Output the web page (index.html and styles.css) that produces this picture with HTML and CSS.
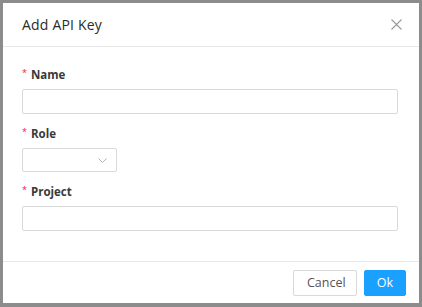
FILE: index.html
```html
<!DOCTYPE html>
<html>
<head>
<meta charset="utf-8">
<link rel="stylesheet" href="styles.css">
</head>
<body>
<div class="modal">
  <div class="modal-header">
    <span class="modal-title">Add API Key</span>
    <svg class="close" width="11" height="11" viewBox="0 0 11 11"><path d="M0.5 0.5 L10.5 10.5 M10.5 0.5 L0.5 10.5" stroke="#9a9a9a" stroke-width="1.1" fill="none"/></svg>
  </div>
  <div class="modal-body">
    <div class="item">
      <label class="label"><span class="req">*</span>Name</label>
      <div class="input"></div>
    </div>
    <div class="item">
      <label class="label"><span class="req">*</span>Role</label>
      <div class="select">
        <svg width="9" height="5" viewBox="0 0 9 5"><path d="M0.5 0.5 L4.5 4.5 L8.5 0.5" stroke="#b5b5b5" stroke-width="1" fill="none"/></svg>
      </div>
    </div>
    <div class="item">
      <label class="label"><span class="req">*</span>Project</label>
      <div class="input"></div>
    </div>
  </div>
  <div class="modal-footer">
    <button class="btn">Cancel</button>
    <button class="btn primary">Ok</button>
  </div>
</div>
</body>
</html>
```
FILE: styles.css
```css
html, body {
  margin: 0;
  padding: 0;
}
body {
  background: #8c8c8c;
  padding: 3px;
  font-family: "Open Sans", "DejaVu Sans", sans-serif;
  color: #333;
}
.modal {
  width: 416px;
  height: 300px;
  background: #fff;
  display: flex;
  flex-direction: column;
}
.modal-header {
  height: 43px;
  border-bottom: 1px solid #e8e8e8;
  display: flex;
  align-items: center;
  justify-content: space-between;
  padding: 0 17px 0 19px;
}
.modal-title {
  font-size: 14px;
  color: #2b2b2b;
  letter-spacing: 0.2px;
}
.modal-body {
  flex: 1;
  padding: 18px 21px 0 19px;
}
.item {
  margin-bottom: 10px;
}
.label {
  display: block;
  height: 16px;
  line-height: 19px;
  font-size: 11.5px;
  font-weight: 700;
  color: #3a3a3a;
  margin-bottom: 8px;
}
.req {
  color: #f5222d;
  font-weight: 400;
  font-size: 9px;
  margin-right: 4px;
  vertical-align: top;
  line-height: 15px;
}
.input {
  height: 23px;
  border: 1px solid #d9d9d9;
  border-radius: 2px;
}
.select {
  height: 22px;
  border: 1px solid #d9d9d9;
  border-radius: 2px;
  display: flex;
  align-items: center;
  justify-content: flex-end;
  padding-right: 9px;
  width: 84px;
}
.modal-footer {
  height: 41px;
  border-top: 1px solid #e8e8e8;
  display: flex;
  align-items: center;
  justify-content: flex-end;
  gap: 7px;
  padding-right: 13px;
}
.btn {
  height: 26px;
  border: 1px solid #d9d9d9;
  background: #fff;
  border-radius: 2px;
  font-family: "Open Sans", "DejaVu Sans", sans-serif;
  font-size: 12.5px;
  color: #555;
  padding: 0 13px;
  width: 64px;
}
.btn.primary {
  background: #1aa1ff;
  border-color: #1aa1ff;
  color: #fff;
  width: 42px;
  padding: 0;
}
```
